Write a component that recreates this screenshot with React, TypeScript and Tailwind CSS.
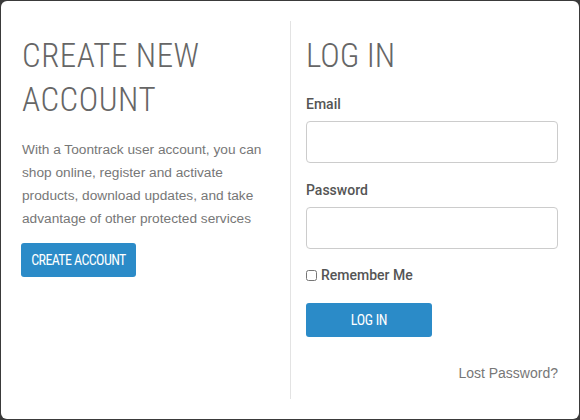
import React from "react";

const cond = { fontFamily: '"Roboto Condensed", "Liberation Sans Narrow", "DejaVu Sans Condensed", sans-serif' };
const med = { fontFamily: 'Roboto, "Liberation Sans", Arial, sans-serif' };

export default function App() {
  return (
    <div className="w-[580px] h-[420px] bg-[#3a3a3a] p-[1px] box-border" style={{ fontFamily: '"Liberation Sans", Arial, sans-serif' }}>
      <div className="w-full h-full bg-white rounded-[6px] flex pt-[20px] pb-[20px]">
        <div className="w-[289px] pl-[21px] pr-[15px] pt-[13px]">
          <h1 className="text-[33px] leading-[44px] font-light text-[#666] tracking-[0.5px]" style={cond}>CREATE NEW ACCOUNT</h1>
          <p className="mt-[16px] text-[13.7px] leading-[23px] text-[#777]">
            With a Toontrack user account, you can shop online, register and activate products, download updates, and take advantage of other protected services
          </p>
          <button className="mt-[13px] h-[34px] w-[115px] -ml-[1px] bg-[#2b8bc8] text-white text-[14px] tracking-[-0.6px] rounded-[3px]" style={cond}>CREATE ACCOUNT</button>
        </div>
        <div className="w-px bg-[#e3e3e3]" />
        <div className="flex-1 pl-[15px] pr-[21px] pt-[13px] flex flex-col">
          <h1 className="text-[33px] leading-[44px] font-light text-[#666]" style={cond}>LOG IN</h1>
          <label className="mt-[16px] text-[14px] font-medium text-[#555] leading-[20px]" style={med}>Email</label>
          <input className="mt-[7px] h-[42px] border border-[#ccc] rounded-[4px]" />
          <label className="mt-[17px] text-[14px] font-medium text-[#555] leading-[20px]" style={med}>Password</label>
          <input type="password" className="mt-[7px] h-[42px] border border-[#ccc] rounded-[4px]" />
          <label className="mt-[16px] flex items-center gap-[4px] text-[14px] font-medium text-[#555] leading-[20px]" style={med}>
            <input type="checkbox" className="w-[11px] h-[11px] m-0" />Remember Me
          </label>
          <button className="mt-[18px] w-[126px] h-[34px] bg-[#2b8bc8] text-white text-[14px] tracking-[-0.3px] rounded-[3px]" style={cond}>LOG IN</button>
          <div className="mt-[26px] text-right text-[14px] text-[#777] leading-[20px]">Lost Password?</div>
        </div>
      </div>
    </div>
  );
}
